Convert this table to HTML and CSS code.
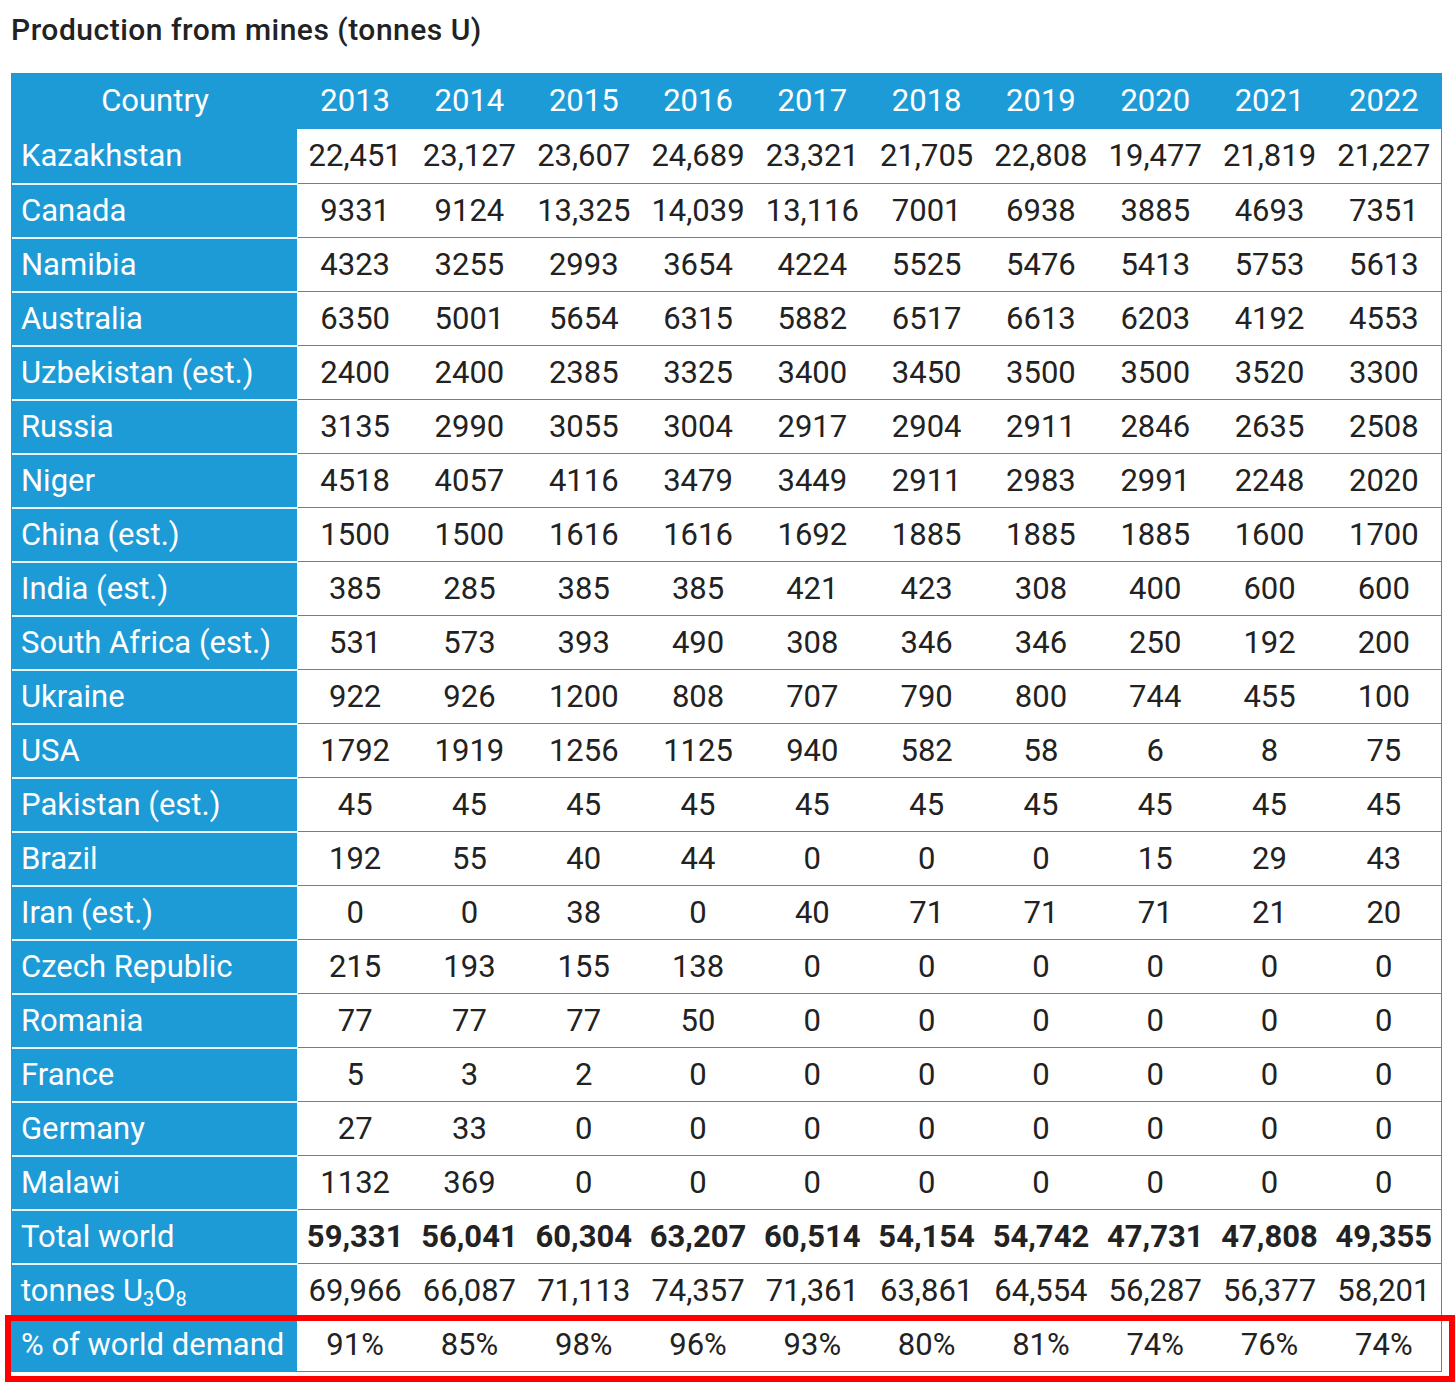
FILE: index.html
```html
<!DOCTYPE html>
<html>
<head>
<meta charset="utf-8">
<link rel="stylesheet" href="styles.css">
</head>
<body>
<div class="page">
  <h2 class="title">Production from mines (tonnes U)</h2>
  <div class="table-wrap">
    <table class="data">
      <colgroup>
        <col class="c-country">
        <col span="10" class="c-year">
      </colgroup>
      <thead>
        <tr>
          <th class="hc">Country</th>
          <th>2013</th><th>2014</th><th>2015</th><th>2016</th><th>2017</th><th>2018</th><th>2019</th><th>2020</th><th>2021</th><th>2022</th>
        </tr>
      </thead>
      <tbody>
        <tr><th>Kazakhstan</th><td>22,451</td><td>23,127</td><td>23,607</td><td>24,689</td><td>23,321</td><td>21,705</td><td>22,808</td><td>19,477</td><td>21,819</td><td>21,227</td></tr>
        <tr><th>Canada</th><td>9331</td><td>9124</td><td>13,325</td><td>14,039</td><td>13,116</td><td>7001</td><td>6938</td><td>3885</td><td>4693</td><td>7351</td></tr>
        <tr><th>Namibia</th><td>4323</td><td>3255</td><td>2993</td><td>3654</td><td>4224</td><td>5525</td><td>5476</td><td>5413</td><td>5753</td><td>5613</td></tr>
        <tr><th>Australia</th><td>6350</td><td>5001</td><td>5654</td><td>6315</td><td>5882</td><td>6517</td><td>6613</td><td>6203</td><td>4192</td><td>4553</td></tr>
        <tr><th>Uzbekistan (est.)</th><td>2400</td><td>2400</td><td>2385</td><td>3325</td><td>3400</td><td>3450</td><td>3500</td><td>3500</td><td>3520</td><td>3300</td></tr>
        <tr><th>Russia</th><td>3135</td><td>2990</td><td>3055</td><td>3004</td><td>2917</td><td>2904</td><td>2911</td><td>2846</td><td>2635</td><td>2508</td></tr>
        <tr><th>Niger</th><td>4518</td><td>4057</td><td>4116</td><td>3479</td><td>3449</td><td>2911</td><td>2983</td><td>2991</td><td>2248</td><td>2020</td></tr>
        <tr><th>China (est.)</th><td>1500</td><td>1500</td><td>1616</td><td>1616</td><td>1692</td><td>1885</td><td>1885</td><td>1885</td><td>1600</td><td>1700</td></tr>
        <tr><th>India (est.)</th><td>385</td><td>285</td><td>385</td><td>385</td><td>421</td><td>423</td><td>308</td><td>400</td><td>600</td><td>600</td></tr>
        <tr><th>South Africa (est.)</th><td>531</td><td>573</td><td>393</td><td>490</td><td>308</td><td>346</td><td>346</td><td>250</td><td>192</td><td>200</td></tr>
        <tr><th>Ukraine</th><td>922</td><td>926</td><td>1200</td><td>808</td><td>707</td><td>790</td><td>800</td><td>744</td><td>455</td><td>100</td></tr>
        <tr><th>USA</th><td>1792</td><td>1919</td><td>1256</td><td>1125</td><td>940</td><td>582</td><td>58</td><td>6</td><td>8</td><td>75</td></tr>
        <tr><th>Pakistan (est.)</th><td>45</td><td>45</td><td>45</td><td>45</td><td>45</td><td>45</td><td>45</td><td>45</td><td>45</td><td>45</td></tr>
        <tr><th>Brazil</th><td>192</td><td>55</td><td>40</td><td>44</td><td>0</td><td>0</td><td>0</td><td>15</td><td>29</td><td>43</td></tr>
        <tr><th>Iran (est.)</th><td>0</td><td>0</td><td>38</td><td>0</td><td>40</td><td>71</td><td>71</td><td>71</td><td>21</td><td>20</td></tr>
        <tr><th>Czech Republic</th><td>215</td><td>193</td><td>155</td><td>138</td><td>0</td><td>0</td><td>0</td><td>0</td><td>0</td><td>0</td></tr>
        <tr><th>Romania</th><td>77</td><td>77</td><td>77</td><td>50</td><td>0</td><td>0</td><td>0</td><td>0</td><td>0</td><td>0</td></tr>
        <tr><th>France</th><td>5</td><td>3</td><td>2</td><td>0</td><td>0</td><td>0</td><td>0</td><td>0</td><td>0</td><td>0</td></tr>
        <tr><th>Germany</th><td>27</td><td>33</td><td>0</td><td>0</td><td>0</td><td>0</td><td>0</td><td>0</td><td>0</td><td>0</td></tr>
        <tr><th>Malawi</th><td>1132</td><td>369</td><td>0</td><td>0</td><td>0</td><td>0</td><td>0</td><td>0</td><td>0</td><td>0</td></tr>
        <tr class="total"><th>Total world</th><td>59,331</td><td>56,041</td><td>60,304</td><td>63,207</td><td>60,514</td><td>54,154</td><td>54,742</td><td>47,731</td><td>47,808</td><td>49,355</td></tr>
        <tr><th>tonnes U<sub>3</sub>O<sub>8</sub></th><td>69,966</td><td>66,087</td><td>71,113</td><td>74,357</td><td>71,361</td><td>63,861</td><td>64,554</td><td>56,287</td><td>56,377</td><td>58,201</td></tr>
        <tr class="last"><th>% of world demand</th><td>91%</td><td>85%</td><td>98%</td><td>96%</td><td>93%</td><td>80%</td><td>81%</td><td>74%</td><td>76%</td><td>74%</td></tr>
      </tbody>
    </table>
    <div class="highlight"></div>
  </div>
</div>
</body>
</html>
```

FILE: styles.css
```css
html, body {
  margin: 0;
  padding: 0;
  background: #ffffff;
}

.page {
  padding: 0 11px 20px;
  font-family: Roboto, "Liberation Sans", sans-serif;
  color: #222222;
}

.title {
  margin: 0;
  padding-top: 12px;
  height: 73px;
  box-sizing: border-box;
  font-size: 30px;
  font-weight: 500;
  line-height: 36px;
  color: #222222;
  letter-spacing: 0.5px;
}

.table-wrap {
  position: relative;
  width: 1431px;
}

.data {
  width: 1431px;
  border-collapse: separate;
  border-spacing: 0;
  table-layout: fixed;
  border: 1px solid #1d9bd7;
  font-size: 31px;
}

.c-country { width: 286px; }

.data th,
.data td {
  height: 54px;
  padding: 0;
  box-sizing: border-box;
  line-height: 36px;
  vertical-align: middle;
}

.data thead th {
  background: #1d9bd7;
  color: #ffffff;
  font-weight: 400;
  text-align: center;
  height: 55px;
  border-bottom: 1px solid #1d9bd7;
}

.data tbody th {
  background: #1d9bd7;
  color: #ffffff;
  font-weight: 400;
  text-align: left;
  padding-left: 9px;
  border-top: 2px solid #e8f4fb;
  border-right: 1px solid #ffffff;
  white-space: nowrap;
}

.data tbody tr:first-child th {
  border-top: 0;
}

.data tbody td {
  text-align: center;
  color: #222222;
  border-top: 1px solid #1d9bd7;
  white-space: nowrap;
}

.data tbody tr:first-child td {
  border-top: 0;
}

.data tbody tr.total td {
  font-weight: 700;
}

.data sub {
  font-size: 20px;
  vertical-align: -5px;
  line-height: 0;
}

.highlight {
  position: absolute;
  left: -6px;
  top: 1242px;
  width: 1450px;
  height: 70px;
  border: 6px solid #ff0000;
  border-bottom-width: 9px;
  box-sizing: border-box;
  pointer-events: none;
}
```
